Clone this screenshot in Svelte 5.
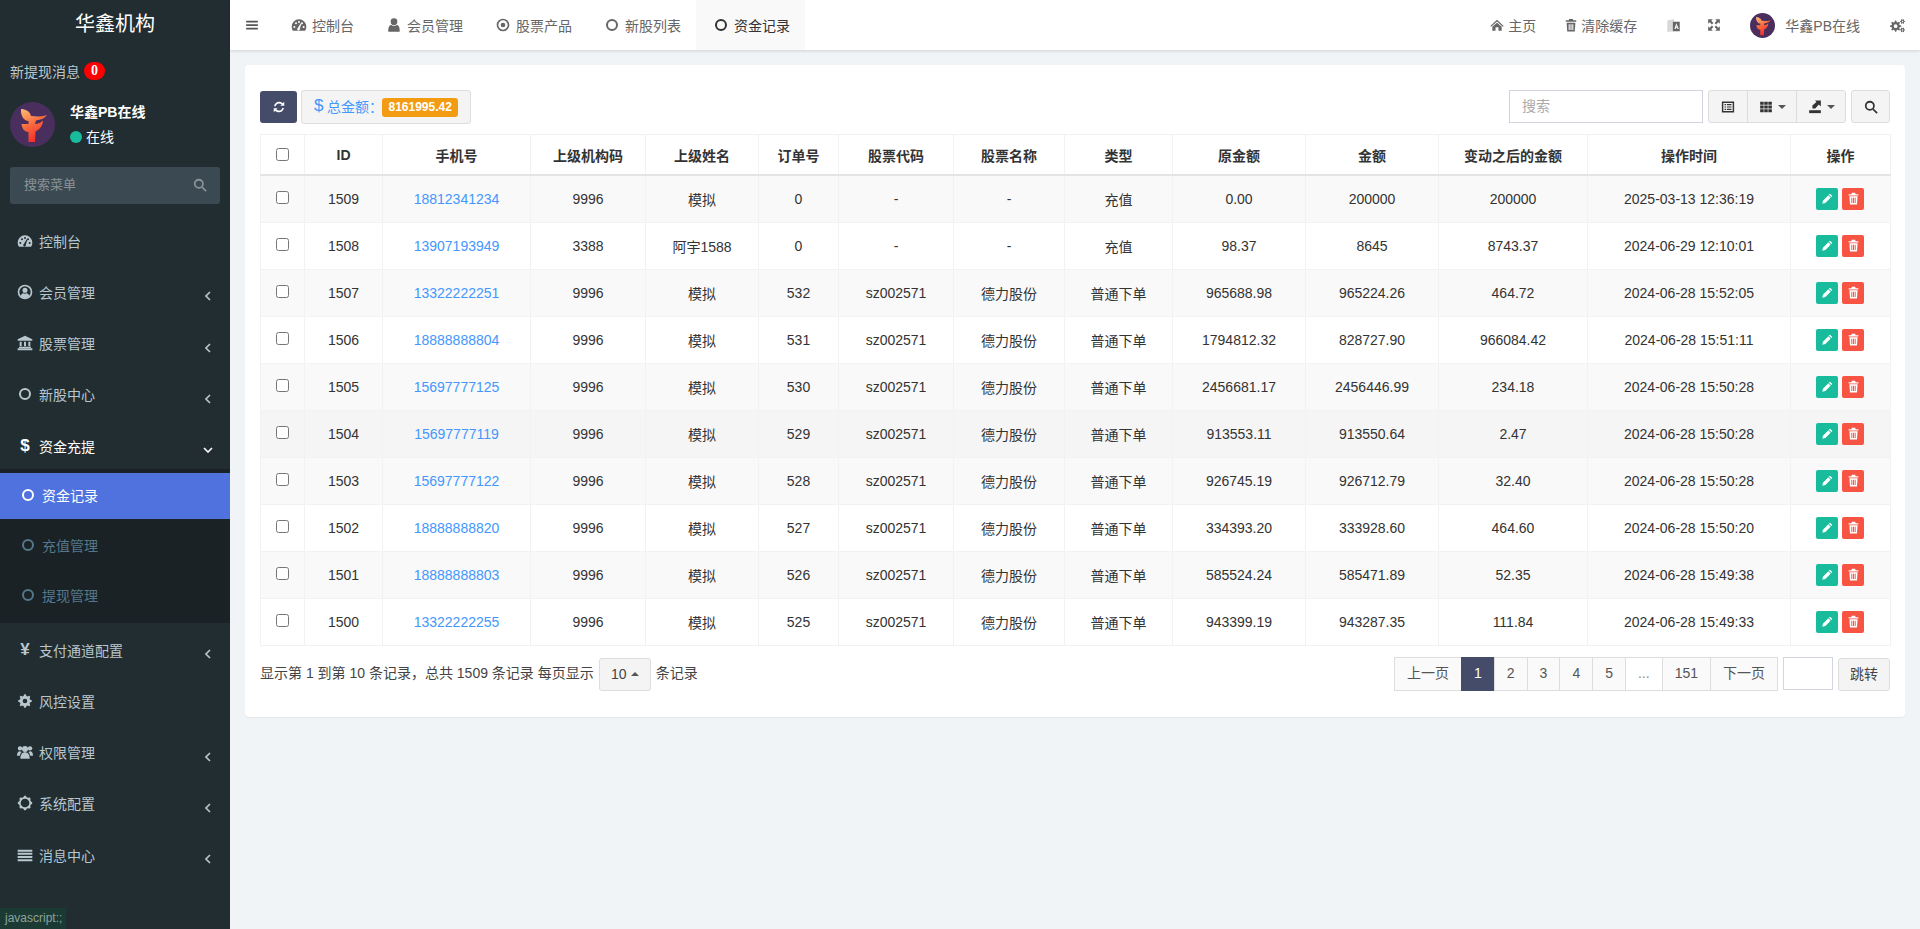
<script>
	// little helpers for the svg icon paths
	function ring(cx, cy, r) {
		return `M${cx - r} ${cy}a${r} ${r} 0 1 0 ${2 * r} 0a${r} ${r} 0 1 0 ${-2 * r} 0z`;
	}
	function gear(cx, cy, R, r, n) {
		let d = "";
		for (let i = 0; i < n * 4; i++) {
			const a = ((i - 0.5) * Math.PI * 2) / (n * 4);
			const rad = i % 4 < 2 ? R : r;
			d += (i ? "L" : "M") + (cx + rad * Math.cos(a)).toFixed(2) + " " + (cy + rad * Math.sin(a)).toFixed(2);
		}
		return d + "z";
	}

	const icons = {
		bars: ["M2 4.5h20v3H2zM2 10.5h20v3H2zM2 16.5h20v3H2z"],
		tacho: [
			"M12 3.5A11 11 0 0 0 1 14.5c0 2.300.7 4.300 1.900 6h18.200c1.200-1.700 1.900-3.700 1.900-6A11 11 0 0 0 12 3.500z" +
				ring(5, 15, 1.5) + ring(7.5, 9.5, 1.5) + ring(12, 7.5, 1.5) + ring(19, 15, 1.5) + ring(16.5, 9.500, 1.5) +
				"M10.300 16.500L14.500 9.500l1 .5-2.300 7.500a2 2 0 1 1-2.900-1z"
		],
		userc: [ring(12, 12, 11) + ring(12, 12, 8.5) + ring(12, 9.5, 3.8), "M5.5 18.500c.6-3 2.500-4.500 4-4.500 1.500 1 3.500 1 5 0 1.500 0 3.400 1.500 4 4.500-3.500 3.600-9.500 3.600-13 0z"],
		bank: ["M12 1L23 6.500V8.500H1V6.500z", "M3 17.500h18v2H3zM1 20h22v3H1z", "M4 10h3v7H4zM10.500 10h3v7h-3zM17 10h3v7h-3z"],
		circle: [ring(12, 12, 9) + ring(12, 12, 6)],
		dot: [ring(12, 12, 9.500) + ring(12, 12, 7), ring(12, 12, 3.500)],
		cog: [gear(12, 12, 10.2, 7.8, 8) + ring(12, 12, 3.5)],
		sun: [gear(12, 12, 10.8, 9, 8) + ring(12, 12, 6.5)],
		users: [
			ring(12, 7.500, 4.500), "M5 22c0-6.500 3-9.500 7-9.500s7 3 7 9.500z",
			ring(4.500, 6.500, 3.300), "M0 17.500c0-4 1.500-6.500 4.500-6.500 1 .8 1.800 1 2.800 .8-1.600 1.500-2.600 3.300-3 5.700z",
			ring(19.500, 6.500, 3.300), "M24 17.500c0-4-1.500-6.500-4.500-6.500-1 .8-1.800 1-2.800 .8 1.600 1.500 2.600 3.300 3 5.700z"
		],
		list: ["M1 4h22v3H1zM1 8.800h22v3H1zM1 13.600h22v3H1zM1 18.400h22v3H1z"],
		user: [ring(12, 7, 5), "M3.500 22c-.5-6 1.500-10 4.500-10 2.300 1.700 5.700 1.700 8 0 3 0 5 4 4.500 10z"],
		home: ["M12 3L23.500 13.500 22 15 12 6 2 15 .5 13.500z", "M12 8l8 7v7h-5.500v-6h-5v6H4v-7z"],
		trash: ["M9 1.500h6l1 2.500h5v2.500H3V4h5z", "M4.500 8h15l-1 15h-13zM8 10.500v10h1.800v-10zM11.100 10.500v10h1.800v-10zM14.200 10.500v10H16v-10z"],
		arrows: [
			"M2 2h8L7.300 4.700 11 8.400 8.400 11 4.700 7.300 2 10z",
			"M22 2v8l-2.700-2.700L15.600 11 13 8.400l3.700-3.700L14 2z",
			"M2 22v-8l2.700 2.700L8.400 13 11 15.600l-3.700 3.700L10 22z",
			"M22 22h-8l2.700-2.700L13 15.600 15.600 13l3.700 3.700L22 14z"
		],
		gears: [gear(9, 13, 9, 6.5, 8) + ring(9, 13, 3), gear(20, 5.500, 4, 2.800, 6) + ring(20, 5.500, 1.200), gear(20, 19, 4, 2.800, 6) + ring(20, 19, 1.200)],
		refresh: [
			"M3.500 10.500C4.500 6 8 3 12 3c2.600 0 5 1 6.600 2.600L21 3.200V10h-6.800l2.400-2.400C15.400 6.400 13.800 5.800 12 5.800c-2.600 0-4.800 1.800-5.600 4.700z",
			"M20.500 13.500C19.500 18 16 21 12 21c-2.600 0-5-1-6.600-2.600L3 20.800V14h6.800l-2.400 2.400c1.200 1.200 2.800 1.800 4.600 1.800 2.600 0 4.800-1.800 5.600-4.700z"
		],
		listalt: ["M1.500 2.500h21v19h-21zM4 5v14h16V5z", "M6 7h2.500v2H6zM10 7h8v2h-8zM6 11h2.500v2H6zM10 11h8v2h-8zM6 15h2.500v2H6zM10 15h8v2h-8z"],
		th: ["M2 3h6v5H2zM9 3h6v5H9zM16 3h6v5h-6zM2 9.500h6v5H2zM9 9.500h6v5H9zM16 9.500h6v5h-6zM2 16h6v5H2zM9 16h6v5H9zM16 16h6v5h-6z"],
		exportbox: ["M2 17.500h20v5H2z", "M12 1h10v10l-3.500-3.500-6 7h-5v-5l7-6z"],
		search: [ring(10, 10, 8.500) + ring(10, 10, 5.500), "M14.500 16.500l2-2 7 7-2 2z"],
		pencil: ["M16.500 3L21 7.500 8 20.500l-5.500 1 1-5.500zM14.600 5l-1 1 4.400 4.400 1-1z"]
	};

	const sideMenu = [
		{ icon: "tacho", text: "控制台" },
		{ icon: "userc", text: "会员管理", arrow: true },
		{ icon: "bank", text: "股票管理", arrow: true },
		{ icon: "circle", text: "新股中心", arrow: true },
		{
			glyph: "$", text: "资金充提", open: true,
			children: [
				{ text: "资金记录", active: true },
				{ text: "充值管理" },
				{ text: "提现管理" }
			]
		},
		{ glyph: "¥", text: "支付通道配置", arrow: true },
		{ icon: "cog", text: "风控设置" },
		{ icon: "users", text: "权限管理", arrow: true },
		{ icon: "sun", text: "系统配置", arrow: true },
		{ icon: "list", text: "消息中心", arrow: true }
	];

	const tabs = [
		{ icon: "tacho", text: "控制台" },
		{ icon: "user", text: "会员管理" },
		{ icon: "dot", text: "股票产品" },
		{ icon: "circle", text: "新股列表" },
		{ icon: "circle", text: "资金记录", active: true }
	];

	const columns = [
		{ w: 44 }, { w: 78, t: "ID" }, { w: 148, t: "手机号" }, { w: 115, t: "上级机构码" },
		{ w: 113, t: "上级姓名" }, { w: 80, t: "订单号" }, { w: 115, t: "股票代码" }, { w: 111, t: "股票名称" },
		{ w: 108, t: "类型" }, { w: 133, t: "原金额" }, { w: 133, t: "金额" }, { w: 149, t: "变动之后的金额" },
		{ w: 203, t: "操作时间" }, { w: 100, t: "操作" }
	];

	const rows = [
		["1509", "18812341234", "9996", "模拟", "0", "-", "-", "充值", "0.00", "200000", "200000", "2025-03-13 12:36:19"],
		["1508", "13907193949", "3388", "阿宇1588", "0", "-", "-", "充值", "98.37", "8645", "8743.37", "2024-06-29 12:10:01"],
		["1507", "13322222251", "9996", "模拟", "532", "sz002571", "德力股份", "普通下单", "965688.98", "965224.26", "464.72", "2024-06-28 15:52:05"],
		["1506", "18888888804", "9996", "模拟", "531", "sz002571", "德力股份", "普通下单", "1794812.32", "828727.90", "966084.42", "2024-06-28 15:51:11"],
		["1505", "15697777125", "9996", "模拟", "530", "sz002571", "德力股份", "普通下单", "2456681.17", "2456446.99", "234.18", "2024-06-28 15:50:28"],
		["1504", "15697777119", "9996", "模拟", "529", "sz002571", "德力股份", "普通下单", "913553.11", "913550.64", "2.47", "2024-06-28 15:50:28"],
		["1503", "15697777122", "9996", "模拟", "528", "sz002571", "德力股份", "普通下单", "926745.19", "926712.79", "32.40", "2024-06-28 15:50:28"],
		["1502", "18888888820", "9996", "模拟", "527", "sz002571", "德力股份", "普通下单", "334393.20", "333928.60", "464.60", "2024-06-28 15:50:20"],
		["1501", "18888888803", "9996", "模拟", "526", "sz002571", "德力股份", "普通下单", "585524.24", "585471.89", "52.35", "2024-06-28 15:49:38"],
		["1500", "13322222255", "9996", "模拟", "525", "sz002571", "德力股份", "普通下单", "943399.19", "943287.35", "111.84", "2024-06-28 15:49:33"]
	];

	const pages = ["上一页", "1", "2", "3", "4", "5", "...", "151", "下一页"];
</script>

{#snippet icon(name)}
	<svg class="ic" viewBox="0 0 24 24" fill="currentColor" aria-hidden="true">
		{#each icons[name] as d}
			<path {d} fill-rule="evenodd" />
		{/each}
	</svg>
{/snippet}

{#snippet logo()}
	<svg class="logo" viewBox="0 0 45 45" aria-hidden="true">
		<defs>
			<linearGradient id="logofill" x1="0.2" y1="0" x2="0.6" y2="1">
				<stop offset="0" stop-color="#fbb46e" />
				<stop offset="0.5" stop-color="#f8663c" />
				<stop offset="1" stop-color="#f5282a" />
			</linearGradient>
		</defs>
		<circle cx="22.500" cy="22.500" r="22.500" fill="#4a2f5e" />
		<path
			fill="url(#logofill)"
			d="M11 7C15 7 20 9 21 14L28 14.500C31 14.500 34 14 37 13C35 16 31 18 26 18.500L25 22C28 22 31 20.500 33 18.500C33 24 29 28 25.500 29.500L25 40L18.500 40L18.500 30C15 30 12 27 11.500 22L18.500 22L18.500 19C14 19 10.500 14 11 7Z"
		/>
	</svg>
{/snippet}

<div class="page">
	<aside class="sidebar">
		<div class="brand">华鑫机构</div>
		<div class="msg">新提现消息 <span class="badge">0</span></div>
		<div class="userpanel">
			{@render logo()}
			<div class="userinfo">
				<strong>华鑫PB在线</strong>
				<span class="online"><i></i>在线</span>
			</div>
		</div>
		<div class="sidesearch">
			<input placeholder="搜索菜单" />
			{@render icon("search")}
		</div>
		<ul class="menu">
			{#each sideMenu as m}
				<li class:after-open={m.glyph === "¥"}>
					<div class="item" class:open={m.open}>
						<span class="slot">
							{#if m.glyph}<b class="glyph">{m.glyph}</b>{:else}{@render icon(m.icon)}{/if}
						</span>
						<span>{m.text}</span>
						{#if m.arrow}
							<svg class="chev" viewBox="0 0 6 10"><path d="M5 1L1 5l4 4" /></svg>
						{/if}
						{#if m.open}
							<svg class="chevdown" viewBox="0 0 10 6"><path d="M1 1l4 4 4-4" /></svg>
						{/if}
					</div>
					{#if m.children}
						<ul class="sub">
							{#each m.children as c}
								<li class:active={c.active}>
									{@render icon("circle")}
									<span>{c.text}</span>
								</li>
							{/each}
						</ul>
					{/if}
				</li>
			{/each}
		</ul>
	</aside>

	<div class="main">
		<header class="topbar">
			<div class="tabs">
				<span class="burger">{@render icon("bars")}</span>
				{#each tabs as t}
					<div class="tab" class:active={t.active}>
						{@render icon(t.icon)}
						<span>{t.text}</span>
					</div>
				{/each}
			</div>
			<div class="topright">
				<div class="tool home">{@render icon("home")}<span>主页</span></div>
				<div class="tool cache">{@render icon("trash")}<span>清除缓存</span></div>
				<div class="tool lang">
					<svg class="ic" viewBox="0 0 24 24" aria-hidden="true">
						<path fill="#d8d8d8" d="M2 4l11-2.500V21L2 22.500z" />
						<path fill="#666" fill-rule="evenodd" d="M11 6h11v15H11zM16.500 8.500l-3 9h2l.6-2h1.800l.6 2h2zM16.500 13.500l.5-1.800.5 1.800z" />
					</svg>
				</div>
				<div class="tool full">{@render icon("arrows")}</div>
				<div class="tool me">{@render logo()}<span>华鑫PB在线</span></div>
				<div class="tool gearsbox">{@render icon("gears")}</div>
			</div>
		</header>

		<section class="content">
			<div class="card">
				<div class="toolbar">
					<div class="tleft">
						<button class="refresh">{@render icon("refresh")}</button>
						<div class="total">
							<span class="dollar">$</span>
							<span class="totaltext">总金额：</span>
							<span class="amount">8161995.42</span>
						</div>
					</div>
					<div class="tright">
						<input class="tsearch" placeholder="搜索" />
						<div class="group">
							<button class="g1">{@render icon("listalt")}</button>
							<button class="g2">{@render icon("th")}<i class="caret"></i></button>
							<button class="g2">{@render icon("exportbox")}<i class="caret"></i></button>
						</div>
						<button class="searchbtn">{@render icon("search")}</button>
					</div>
				</div>

				<table>
					<colgroup>
						{#each columns as c}
							<col style="width:{c.w}px" />
						{/each}
					</colgroup>
					<thead>
						<tr>
							<th><input type="checkbox" /></th>
							{#each columns.slice(1) as c}
								<th>{c.t}</th>
							{/each}
						</tr>
					</thead>
					<tbody>
						{#each rows as r, i}
							<tr class:hover={i === 5}>
								<td><input type="checkbox" /></td>
								{#each r as cell, j}
									<td>
										{#if j === 1}<a href="#top" class="phone">{cell}</a>{:else}{cell}{/if}
									</td>
								{/each}
								<td>
									<div class="acts">
										<button class="edit">{@render icon("pencil")}</button>
										<button class="del">{@render icon("trash")}</button>
									</div>
								</td>
							</tr>
						{/each}
					</tbody>
				</table>

				<div class="foot">
					<div class="info">
						<span>显示第 1 到第 10 条记录，总共 1509 条记录 每页显示</span>
						<button class="size">10<i class="caret up"></i></button>
						<span>条记录</span>
					</div>
					<div class="pager">
						<ul>
							{#each pages as p}
								<li class:current={p === "1"} class:ell={p === "..."}>{p}</li>
							{/each}
						</ul>
						<input class="jump" />
						<button class="go">跳转</button>
					</div>
				</div>
			</div>
		</section>
	</div>

	<div class="status">javascript:;</div>
</div>

<style>
	:global(body) {
		margin: 0;
		overflow: hidden;
		background: #f1f4f6;
		font-family: "Liberation Sans", "Noto Sans CJK SC", sans-serif;
		font-size: 14px;
		color: #333;
	}
	button, input {
		font: inherit;
		box-sizing: border-box;
	}
	ul {
		list-style: none;
		margin: 0;
		padding: 0;
	}
	.page {
		display: flex;
		height: 929px;
		position: relative;
		overflow: hidden;
	}
	.ic {
		display: block;
		flex: none;
		width: 14px;
		height: 14px;
	}
	.logo {
		display: block;
		flex: none;
	}

	/* sidebar */
	.sidebar {
		width: 230px;
		flex: none;
		background: #222d32;
		color: #b8c7ce;
	}
	.brand {
		height: 50px;
		line-height: 48px;
		text-align: center;
		font-size: 20px;
		color: #fff;
	}
	.msg {
		height: 44px;
		box-sizing: border-box;
		padding: 0 0 3px 10px;
		display: flex;
		align-items: center;
		gap: 4px;
	}
	.badge {
		width: 21px;
		height: 18px;
		border-radius: 9px;
		background: #f00;
		color: #fff;
		font: bold 14px/18px "Liberation Serif", serif;
		text-align: center;
	}
	.userpanel {
		display: flex;
		align-items: center;
		gap: 15px;
		padding: 8px 10px;
	}
	.userpanel .logo {
		width: 45px;
		height: 45px;
	}
	.userinfo {
		display: flex;
		flex-direction: column;
		gap: 5px;
		color: #fff;
		line-height: 20px;
	}
	.online {
		display: flex;
		align-items: center;
		gap: 4px;
	}
	.online i {
		width: 12px;
		height: 12px;
		border-radius: 50%;
		background: #18bc9c;
	}
	.sidesearch {
		margin: 12px 10px;
		height: 37px;
		position: relative;
		color: #8a9296;
	}
	.sidesearch input {
		width: 100%;
		height: 100%;
		border: 0;
		border-radius: 3px;
		background: #3b4a52;
		padding: 0 40px 2px 14px;
		font-size: 13px;
		color: #ccc;
		outline: none;
	}
	.sidesearch input::placeholder {
		color: #8a9296;
	}
	.sidesearch .ic {
		position: absolute;
		right: 13px;
		top: 11px;
		width: 14px;
		height: 14px;
	}
	.item {
		height: 51.25px;
		box-sizing: border-box;
		display: flex;
		align-items: center;
		padding: 0 0 2px 17px;
		gap: 6px;
		position: relative;
	}
	.item.open {
		color: #fff;
	}
	.slot {
		width: 16px;
		display: flex;
		justify-content: center;
		flex: none;
	}
	.slot .ic {
		width: 16px;
		height: 16px;
	}
	.glyph {
		font-size: 17px;
		line-height: 16px;
	}
	.chev, .chevdown {
		position: absolute;
		fill: none;
		stroke: currentColor;
		stroke-width: 1.6;
	}
	.chev {
		width: 6px;
		height: 10px;
		left: 205px;
		top: 24px;
	}
	.chevdown {
		width: 10px;
		height: 6px;
		left: 203px;
		top: 26px;
	}
	.after-open {
		margin-top: 2px;
	}
	.sub {
		margin-top: -3.25px;
		padding: 4px 0;
		background: #1a2226;
		position: relative;
	}
	.sub li {
		height: 46px;
		box-sizing: border-box;
		display: flex;
		align-items: center;
		gap: 6px;
		padding: 0 0 2px 20px;
		color: #55778a;
	}
	.sub li + li {
		margin-top: 4px;
	}
	.sub .ic {
		width: 16px;
		height: 16px;
	}
	.sub li.active {
		background: #4f72de;
		color: #fff;
	}

	/* top bar */
	.main {
		flex: 1;
		min-width: 0;
	}
	.topbar {
		height: 50px;
		background: #fff;
		display: flex;
		justify-content: space-between;
		box-shadow: 0 1px 3px rgba(0, 0, 0, 0.14);
		color: #666;
		position: relative;
	}
	.tabs, .topright {
		display: flex;
		align-items: stretch;
	}
	.burger {
		width: 44px;
		padding-left: 15px;
		box-sizing: border-box;
		display: flex;
		align-items: center;
		color: #555;
	}
	.tab {
		display: flex;
		align-items: center;
		gap: 6px;
		padding: 0 15px 0 18px;
	}
	.tab .ic {
		width: 16px;
		height: 16px;
		margin: 0 -1px;
	}
	.tab.active {
		background: #f9f9f9;
		color: #333;
	}
	.tool {
		display: flex;
		align-items: center;
	}
	.home {
		gap: 4px;
		margin-right: 28px;
	}
	.cache {
		gap: 3px;
		margin-right: 29px;
	}
	.lang {
		margin-right: 26px;
	}
	.lang .ic {
		width: 15px;
		height: 15px;
	}
	.full {
		margin-right: 29px;
	}
	.me {
		gap: 10px;
		margin-right: 30px;
	}
	.me .logo {
		width: 25px;
		height: 25px;
	}
	.gearsbox {
		margin-right: 15px;
	}
	.gearsbox .ic {
		width: 15px;
		height: 15px;
	}

	/* card */
	.content {
		padding: 15px;
	}
	.card {
		background: #fff;
		border-radius: 4px;
		padding: 25px 15px;
		box-shadow: 0 1px 1px rgba(0, 0, 0, 0.05);
	}
	.toolbar {
		display: flex;
		justify-content: space-between;
		height: 34px;
		margin-bottom: 10px;
	}
	.tleft, .tright {
		display: flex;
		align-items: flex-start;
	}
	.tleft {
		gap: 4px;
	}
	.refresh {
		width: 37px;
		height: 32px;
		margin-top: 1px;
		border: 0;
		border-radius: 3px;
		background: #444c69;
		color: #fff;
		display: flex;
		align-items: center;
		justify-content: center;
		padding: 0;
	}
	.total {
		height: 34px;
		box-sizing: border-box;
		display: flex;
		align-items: center;
		padding: 0 12px;
		background: #f4f4f4;
		border: 1px solid #ddd;
		border-radius: 3px;
		color: #4397fd;
	}
	.dollar {
		font-size: 17px;
		width: 13px;
		margin-bottom: 2px;
	}
	.totaltext {
		margin-bottom: 2px;
	}
	.amount {
		margin-left: -1px;
		background: #f39c12;
		color: #fff;
		font-weight: bold;
		font-size: 12px;
		line-height: 19px;
		padding: 0 6.5px;
		border-radius: 3px;
	}
	.tright {
		gap: 5px;
	}
	.tsearch {
		width: 194px;
		height: 33px;
		border: 1px solid #d2d2e0;
		padding: 0 12px 2px;
		outline: none;
	}
	.tsearch::placeholder {
		color: #aaa;
	}
	.group {
		display: flex;
		height: 33px;
	}
	.group button, .searchbtn {
		height: 33px;
		background: #f4f4f4;
		border: 1px solid #ddd;
		padding: 0;
		color: #333;
		display: flex;
		align-items: center;
		justify-content: center;
		gap: 5px;
	}
	.group button + button {
		margin-left: -1px;
	}
	.g1 {
		width: 40px;
		border-radius: 3px 0 0 3px;
	}
	.g2 {
		width: 50px;
	}
	.group button:last-child {
		border-radius: 0 3px 3px 0;
	}
	.searchbtn {
		width: 39px;
		border-radius: 3px;
	}
	.caret {
		width: 0;
		height: 0;
		border-left: 4px solid transparent;
		border-right: 4px solid transparent;
		border-top: 4px solid #555;
	}
	.caret.up {
		border-top: 0;
		border-bottom: 4px solid #555;
	}

	/* table */
	table {
		width: 1630px;
		table-layout: fixed;
		border-collapse: collapse;
		border: 1px solid #f2f2f2;
	}
	th, td {
		border: 1px solid #f2f2f2;
		text-align: center;
		padding: 0;
		vertical-align: middle;
	}
	th {
		height: 38px;
		padding-top: 1px;
		font-weight: bold;
		border-bottom: 2px solid #e4e4e4;
	}
	td {
		height: 45px;
		padding-bottom: 1px;
	}
	th input, td input {
		margin: 3px 4px 5px 3px;
	}
	tbody tr:nth-child(odd) {
		background: #f9f9f9;
	}
	tbody tr.hover {
		background: #f5f5f5;
	}
	.phone {
		color: #4397fd;
		text-decoration: none;
	}
	.acts {
		display: flex;
		justify-content: center;
		gap: 4px;
		padding-right: 1px;
	}
	.acts button {
		width: 22px;
		height: 22px;
		padding: 0;
		border: 0;
		border-radius: 2px;
		color: #fff;
		display: flex;
		align-items: center;
		justify-content: center;
	}
	.acts .ic {
		width: 13px;
		height: 13px;
	}
	.edit {
		background: #18bc9c;
	}
	.del {
		background: #f75444;
	}

	/* footer of the card */
	.foot {
		display: flex;
		justify-content: space-between;
		margin-top: 11px;
		height: 35px;
	}
	.info {
		display: flex;
		align-items: flex-start;
		gap: 5px;
		line-height: 32px;
		color: #444;
		white-space: pre;
	}
	.size {
		margin: 1px 0 0;
		width: 52px;
		height: 33px;
		background: #f4f4f4;
		border: 1px solid #ddd;
		border-radius: 3px;
		padding: 0 0 2px;
		color: #444;
		display: flex;
		align-items: center;
		justify-content: center;
		gap: 4px;
	}
	.pager {
		display: flex;
		gap: 5px;
		align-items: flex-start;
	}
	.pager ul {
		display: flex;
		height: 34px;
	}
	.pager li {
		padding: 0 12px;
		border: 1px solid #ddd;
		margin-left: -1px;
		background: #fafafa;
		line-height: 30px;
		color: #555;
	}
	.pager li.current {
		background: #444c69;
		border-color: #444c69;
		color: #fff;
	}
	.pager li.ell {
		color: #888;
		background: #fff;
	}
	.jump {
		width: 50px;
		height: 33px;
		border: 1px solid #d2d6de;
		outline: none;
	}
	.go {
		width: 52px;
		height: 33px;
		margin-top: 1px;
		background: #f4f4f4;
		border: 1px solid #ddd;
		border-radius: 3px;
		color: #444;
		padding: 0 0 3px;
	}

	/* link hint in the corner, over the sidebar */
	.status {
		position: absolute;
		left: 0;
		bottom: 0;
		height: 21px;
		width: 66px;
		line-height: 21px;
		padding-left: 5px;
		box-sizing: border-box;
		background: #1c3a34;
		color: #8ca39a;
		font-size: 12px;
	}
</style>
